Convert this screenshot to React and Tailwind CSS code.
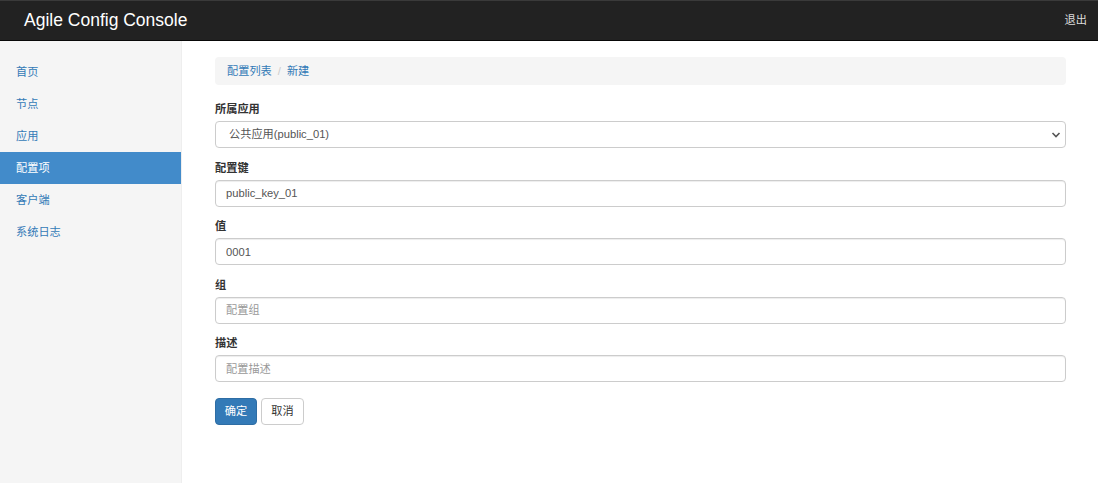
import React from "react";

const font = { fontFamily: '"Liberation Sans", Arial, "Noto Sans CJK SC", sans-serif' };

function Field({ label, children }) {
  return (
    <div className="pb-[10.5px]">
      <div className="h-[18px] leading-[18px] mb-[3px] text-[11.2px] font-bold text-[#333]">{label}</div>
      {children}
    </div>
  );
}

function Input({ value, placeholder }) {
  return (
    <input
      readOnly
      value={value || ""}
      placeholder={placeholder}
      className="block w-full h-[27px] px-[10px] text-[11.2px] text-[#555] placeholder:text-[#999] border border-[#ccc] rounded-[4px] bg-white shadow-[inset_0_1px_1px_rgba(0,0,0,0.075)] outline-none"
      style={font}
    />
  );
}

export default function App() {
  const nav = ["首页", "节点", "应用", "配置项", "客户端", "系统日志"];
  return (
    <div className="w-[1098px] h-[483px] bg-white overflow-hidden" style={font}>
      <div className="h-[41px] bg-[#222] border-t border-[#3a3a3a] border-b border-b-[#080808] flex items-center justify-between pl-[24px] pr-[11px]">
        <span className="text-white text-[17.5px]">Agile Config Console</span>
        <span className="text-[#ddd] text-[11.2px]">退出</span>
      </div>
      <div className="flex h-[442px]">
        <div className="w-[182px] bg-[#f5f5f5] border-r border-[#eee] pt-[15px]">
          {nav.map((n) => (
            <div
              key={n}
              className={
                "h-[32px] leading-[32px] pl-[16px] text-[11.2px] " +
                (n === "配置项" ? "bg-[#428bca] text-white" : "text-[#337ab7]")
              }
            >
              {n}
            </div>
          ))}
        </div>
        <div className="flex-1 pl-[33px] pr-[32px] pt-[16px]">
          <div className="h-[28px] bg-[#f5f5f5] rounded-[4px] flex items-center pl-[12px] text-[11.2px] mb-[15px]">
            <span className="text-[#337ab7]">配置列表</span>
            <span className="text-[#ccc] px-[6px]">/</span>
            <span className="text-[#337ab7]">新建</span>
          </div>
          <Field label="所属应用">
            <div className="relative h-[27px] w-full border border-[#ccc] rounded-[4px] bg-white flex items-center pl-[13px] text-[11.2px] text-[#555]">
              公共应用(public_01)
              <svg className="absolute right-[3px] top-[8px]" width="12" height="10" viewBox="0 0 12 10">
                <path d="M2.5 3 L6 6.5 L9.5 3" fill="none" stroke="#555" strokeWidth="1.6" />
              </svg>
            </div>
          </Field>
          <Field label="配置键">
            <Input value="public_key_01" />
          </Field>
          <Field label="值">
            <Input value="0001" />
          </Field>
          <Field label="组">
            <Input placeholder="配置组" />
          </Field>
          <Field label="描述">
            <Input placeholder="配置描述" />
          </Field>
          <div className="flex gap-[4px] mt-[5.5px]">
            <button className="h-[27px] w-[42px] bg-[#337ab7] border border-[#2e6da4] rounded-[4px] text-white text-[11.2px]">确定</button>
            <button className="h-[27px] w-[43px] bg-white border border-[#ccc] rounded-[4px] text-[#333] text-[11.2px]">取消</button>
          </div>
        </div>
      </div>
    </div>
  );
}
